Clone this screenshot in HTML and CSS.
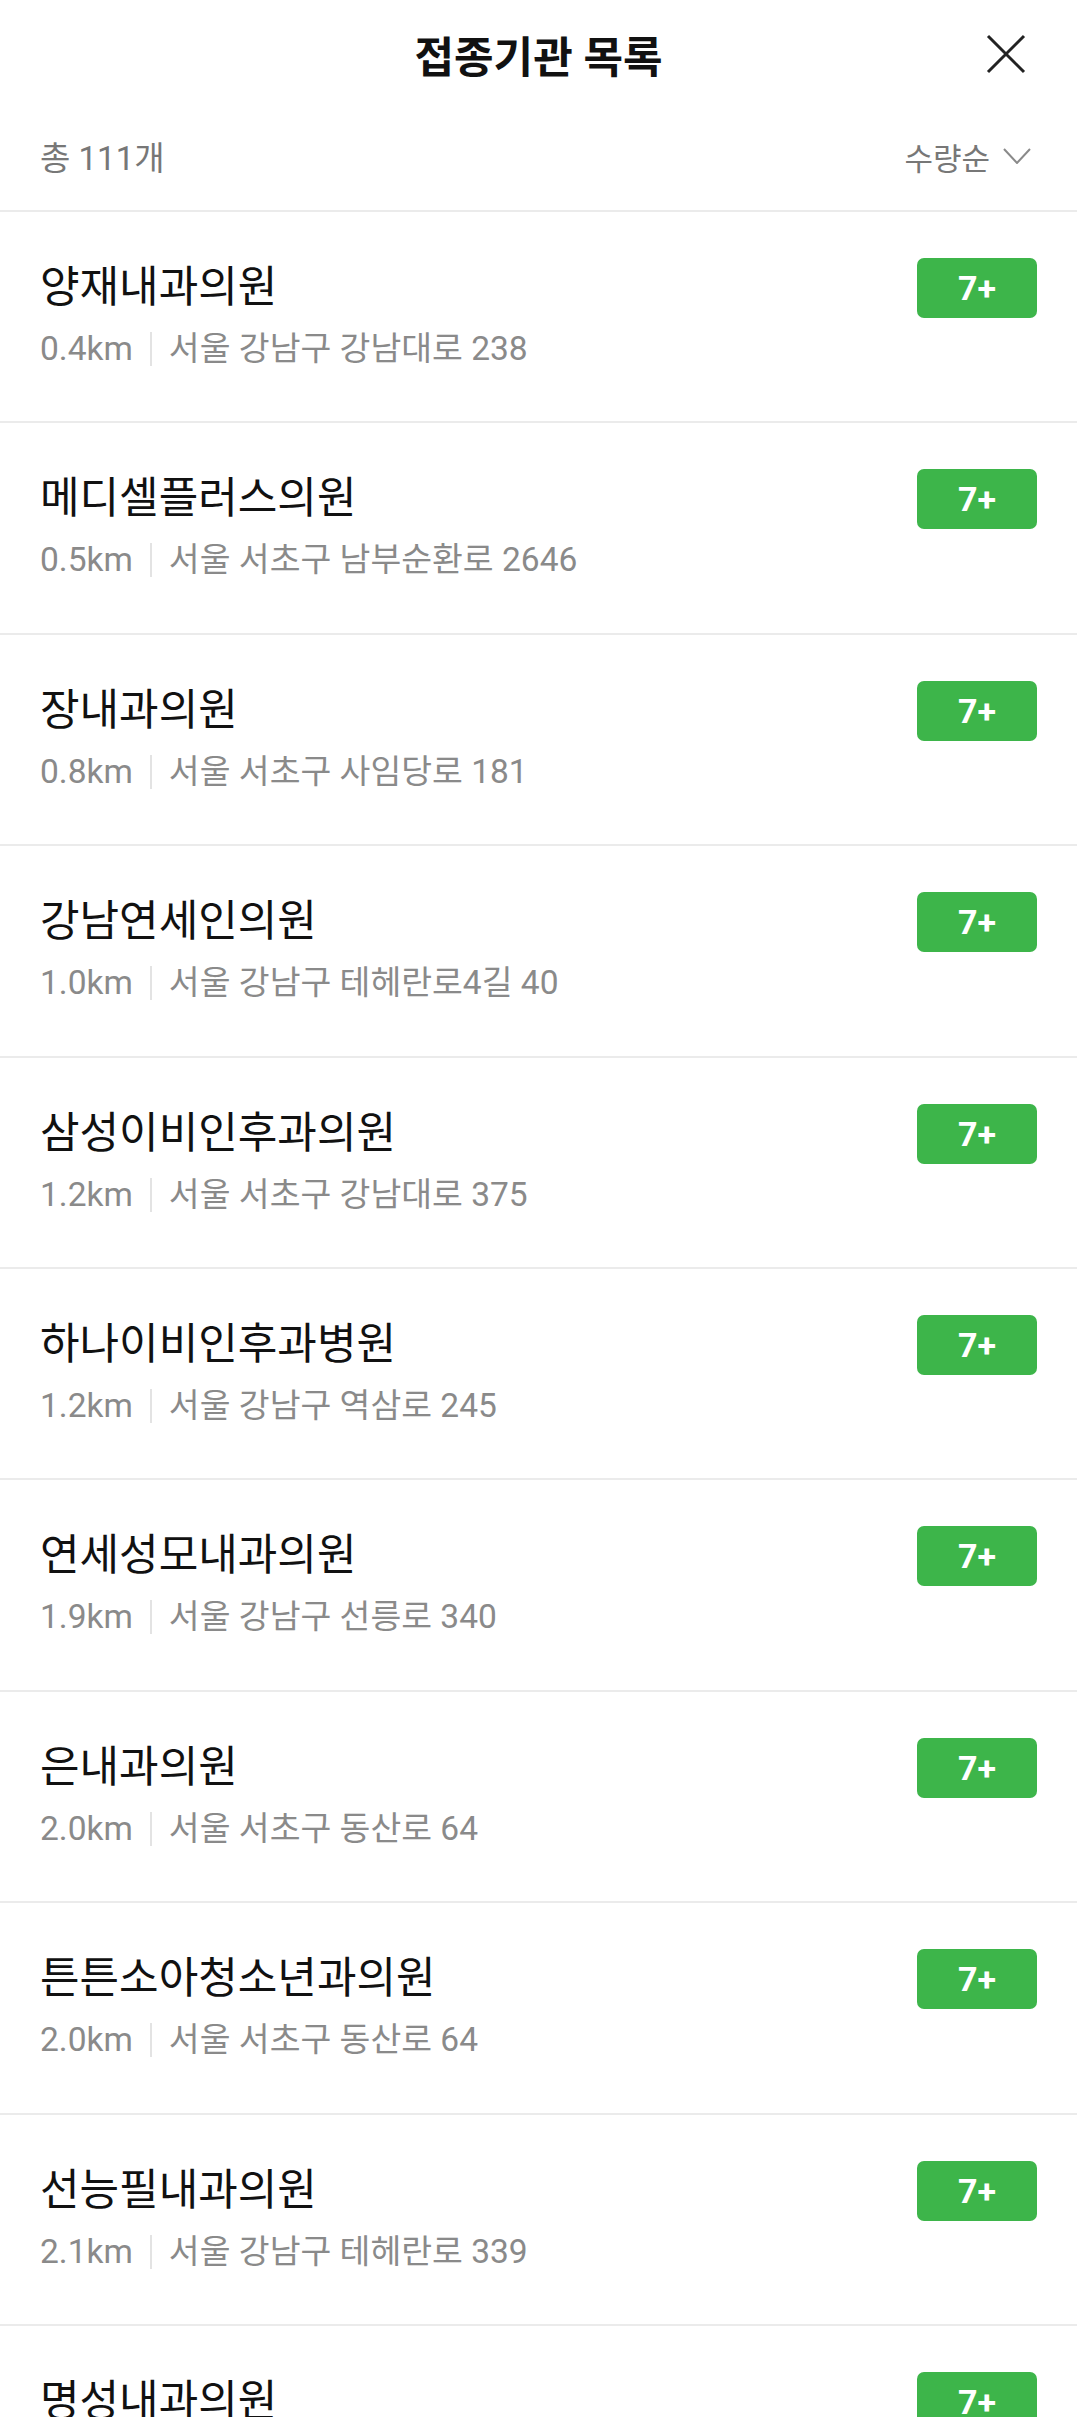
FILE: index.html
```html
<!doctype html>
<html lang="ko">
<head>
  <meta charset="UTF-8">
  <meta name="viewport" content="width=device-width, initial-scale=1.0">
  <title>접종기관 목록</title>
  <link rel="stylesheet" href="styles.css">
</head>
<body>
<div class="page">
  <header class="top">
    <h1>접종기관 목록</h1>
    <button class="close" type="button" aria-label="닫기">
      <svg width="40" height="40" viewBox="0 0 40 40"><path d="M2 2 L38 38 M38 2 L2 38" stroke="#222" stroke-width="3" fill="none"/></svg>
    </button>
  </header>
  <div class="toolbar">
    <span class="count">총 111개</span>
    <span class="sort">수량순
      <svg width="28" height="16" viewBox="0 0 28 16"><path d="M1 1 L14 15 L27 1" stroke="#8a8a8a" stroke-width="2" fill="none"/></svg>
    </span>
  </div>
  <ul class="list">
    <li class="row">
      <div class="info">
        <div class="name">양재내과의원</div>
        <div class="addr"><span class="dist">0.4km</span><span class="bar"></span>서울 강남구 강남대로 238</div>
      </div>
      <span class="badge">7+</span>
    </li>
    <li class="row">
      <div class="info">
        <div class="name">메디셀플러스의원</div>
        <div class="addr"><span class="dist">0.5km</span><span class="bar"></span>서울 서초구 남부순환로 2646</div>
      </div>
      <span class="badge">7+</span>
    </li>
    <li class="row">
      <div class="info">
        <div class="name">장내과의원</div>
        <div class="addr"><span class="dist">0.8km</span><span class="bar"></span>서울 서초구 사임당로 181</div>
      </div>
      <span class="badge">7+</span>
    </li>
    <li class="row">
      <div class="info">
        <div class="name">강남연세인의원</div>
        <div class="addr"><span class="dist">1.0km</span><span class="bar"></span>서울 강남구 테헤란로4길 40</div>
      </div>
      <span class="badge">7+</span>
    </li>
    <li class="row">
      <div class="info">
        <div class="name">삼성이비인후과의원</div>
        <div class="addr"><span class="dist">1.2km</span><span class="bar"></span>서울 서초구 강남대로 375</div>
      </div>
      <span class="badge">7+</span>
    </li>
    <li class="row">
      <div class="info">
        <div class="name">하나이비인후과병원</div>
        <div class="addr"><span class="dist">1.2km</span><span class="bar"></span>서울 강남구 역삼로 245</div>
      </div>
      <span class="badge">7+</span>
    </li>
    <li class="row">
      <div class="info">
        <div class="name">연세성모내과의원</div>
        <div class="addr"><span class="dist">1.9km</span><span class="bar"></span>서울 강남구 선릉로 340</div>
      </div>
      <span class="badge">7+</span>
    </li>
    <li class="row">
      <div class="info">
        <div class="name">은내과의원</div>
        <div class="addr"><span class="dist">2.0km</span><span class="bar"></span>서울 서초구 동산로 64</div>
      </div>
      <span class="badge">7+</span>
    </li>
    <li class="row">
      <div class="info">
        <div class="name">튼튼소아청소년과의원</div>
        <div class="addr"><span class="dist">2.0km</span><span class="bar"></span>서울 서초구 동산로 64</div>
      </div>
      <span class="badge">7+</span>
    </li>
    <li class="row">
      <div class="info">
        <div class="name">선능필내과의원</div>
        <div class="addr"><span class="dist">2.1km</span><span class="bar"></span>서울 강남구 테헤란로 339</div>
      </div>
      <span class="badge">7+</span>
    </li>
    <li class="row">
      <div class="info">
        <div class="name">명성내과의원</div>
        <div class="addr"><span class="dist">2.2km</span><span class="bar"></span>서울 강남구 테헤란로 337</div>
      </div>
      <span class="badge">7+</span>
    </li>
  </ul>
</div>
</body>
</html>
```
FILE: styles.css
```css
html, body { margin: 0; padding: 0; background: #fff; }
* { box-sizing: border-box; font-family: Roboto, "Noto Sans CJK KR", sans-serif; }
.page { height: 100vh; overflow: hidden; }

.top { position: relative; height: 108px; display: flex; align-items: center; justify-content: center; }
.top h1 { margin: 0; font-size: 43px; font-weight: bold; color: #111; }
.close { position: absolute; right: 51px; top: 34px; border: 0; background: none; padding: 0; width: 40px; height: 40px; }
.close svg { display: block; }

.toolbar { height: 104px; padding: 0 46px 6px 40px; display: flex; justify-content: space-between; align-items: center; border-bottom: 2px solid #ebebeb; }
.count { font-size: 33px; color: #777; }
.sort { font-size: 31px; color: #777; display: flex; align-items: center; gap: 13px; }

.list { list-style: none; margin: 0; padding: 0; }
.row { height: 211.4px; padding: 46px 40px 0; display: flex; justify-content: space-between; align-items: flex-start; border-bottom: 2px solid #ebebeb; }
.name { font-size: 43px; line-height: 58px; color: #111; }
.addr { font-size: 33.5px; line-height: 40px; color: #8a8a8a; margin-top: 13px; display: flex; align-items: center; }
.bar { display: inline-block; width: 2px; height: 34px; background: #e3e3e3; margin: 0 17px; }
.badge { width: 120px; height: 60px; border-radius: 7px; background: #3db54a; color: #fff; font-size: 34px; font-weight: bold; display: flex; align-items: center; justify-content: center; }
```
